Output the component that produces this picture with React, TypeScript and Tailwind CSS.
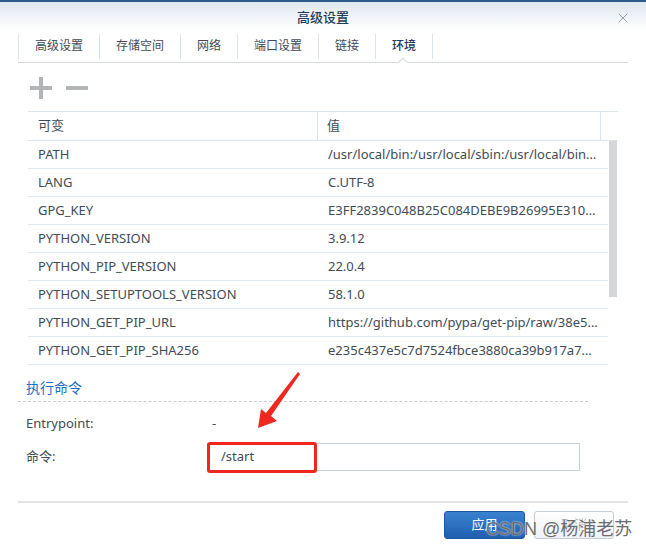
import { X } from 'lucide-react'

const tabs = ['高级设置', '存储空间', '网络', '端口设置', '链接', '环境']

const envVars: [string, string][] = [
  ['PATH', '/usr/local/bin:/usr/local/sbin:/usr/local/bin:/usr/sbin:/usr/bin:/sbin:/bin'],
  ['LANG', 'C.UTF-8'],
  ['GPG_KEY', 'E3FF2839C048B25C084DEBE9B26995E310250568'],
  ['PYTHON_VERSION', '3.9.12'],
  ['PYTHON_PIP_VERSION', '22.0.4'],
  ['PYTHON_SETUPTOOLS_VERSION', '58.1.0'],
  ['PYTHON_GET_PIP_URL', 'https://github.com/pypa/get-pip/raw/38e54e5de07c66e875c11a1ebbdb938854625dd8/public/get-pip.py'],
  ['PYTHON_GET_PIP_SHA256', 'e235c437e5c7d7524fbce3880ca39b917a73dc565e0c813465b7a7a329bb279a'],
]

const font = { fontFamily: '"Noto Sans", "Noto Sans CJK SC", sans-serif' }

export default function App() {
  return (
    <div className="w-[646px] h-[546px] bg-white overflow-hidden relative text-[#414b55]" style={font}>
      {/* title bar */}
      <div className="border-t-2 border-[#2c5b8c] bg-gradient-to-b from-[#e1e7ef] to-white h-[30px] relative flex items-center justify-center pt-[3px]">
        <span className="text-[13px] text-[#1e3c5c] font-medium">高级设置</span>
        <X className="absolute right-[15px] top-[8px] w-[16px] h-[16px] text-[#9aa3ad]" strokeWidth={1.5} />
      </div>

      {/* tabs */}
      <div className="mx-[18px] border-b border-[#d5d9de] relative">
        <div className="flex h-[32px] items-center">
          {tabs.map((t, i) => (
            <div
              key={t}
              className={
                'h-[25px] flex items-center px-[16px] text-[12px] border-l border-[#dde3ea] ' +
                (i === tabs.length - 1 ? 'border-r text-[#1e3c5c] font-medium' : 'text-[#414b55]')
              }
            >
              {t}
            </div>
          ))}
        </div>
        <div className="absolute left-[379px] bottom-[-1px] w-[12px] h-[6px] overflow-hidden">
          <div className="w-[8px] h-[8px] bg-white border-l border-t border-[#d5d9de] rotate-45 mx-auto mt-[2px]" />
        </div>
      </div>

      {/* toolbar */}
      <div className="flex items-center gap-[14px] ml-[30px] mt-[14px] h-[22px]">
        <svg width="22" height="22" viewBox="0 0 22 22">
          <rect x="0" y="9" width="22" height="4" fill="#b3b6b9" />
          <rect x="9" y="0" width="4" height="22" fill="#b3b6b9" />
        </svg>
        <svg width="22" height="22" viewBox="0 0 22 22">
          <rect x="0" y="9" width="22" height="4" fill="#b3b6b9" />
        </svg>
      </div>

      {/* table */}
      <div className="ml-[28px] mt-[12px] w-[590px] text-[13px]">
        <div className="flex h-[30px] border-y border-[#dde4ec] items-center">
          <div className="w-[290px] pl-[10px] border-r border-[#dde4ec] h-full flex items-center">可变</div>
          <div className="w-[283px] pl-[9px] border-r border-[#dde4ec] h-full flex items-center">值</div>
          <div className="flex-1" />
        </div>
        <div className="flex">
          <div className="w-[580px]">
            {envVars.map(([k, v]) => (
              <div key={k} className="flex h-[28px] items-center border-b border-[#e3e9f0]">
                <div className="w-[290px] pl-[10px] truncate">{k}</div>
                <div className="w-[280px] pl-[10px] truncate">{v}</div>
              </div>
            ))}
          </div>
          <div className="w-[8px] h-[156px] bg-[#d4d6d8] ml-px" />
        </div>
      </div>

      {/* run command section */}
      <div className="mx-[18px] mt-[12px] w-[570px]">
        <div className="pl-[8px] text-[14px] text-[#1a6fc4] pb-[3px] border-b border-dashed border-[#c8ccd0]">执行命令</div>
        <div className="flex items-center h-[22px] mt-[11px] pl-[8px] text-[13px]">
          <span className="w-[186px]">Entrypoint:</span>
          <span>-</span>
        </div>
        <div className="flex items-center mt-[8px] pl-[8px] text-[13px]">
          <span className="w-[182px]">命令:</span>
          <div className="relative w-[372px] h-[28px] border border-[#c6d0dc] flex items-center pl-[12px] text-[13px]">
            /start
            <div className="absolute left-[-2px] top-[-2px] w-[110px] h-[31px] border-[3px] border-[#f0271e] rounded-[3px]" />
          </div>
        </div>
      </div>

      {/* red arrow annotation */}
      <svg className="absolute left-[250px] top-[372px]" width="60" height="64" viewBox="0 0 60 64">
        <path d="M50 2 L21 44 L27 49 L8 56 L11 37 L16 41 L48 0 Z" fill="#f0271e" />
      </svg>

      {/* footer */}
      <div className="mx-[18px] mt-[30px] border-t-2 border-[#e3e4e6]" />
      <div className="flex justify-end gap-[9px] mr-[32px] mt-[8px]">
        <button className="w-[81px] h-[28px] rounded-[3px] bg-gradient-to-b from-[#3a82d0] to-[#1f5fb0] border border-[#1d58a0] text-white text-[13px] flex items-center justify-center">
          应用
        </button>
        <button className="w-[80px] h-[28px] rounded-[3px] bg-gradient-to-b from-white to-[#eef2f6] border border-[#c5ccd4] text-[#414b55]/40 text-[13px] flex items-center justify-center">
          取消
        </button>
      </div>

      {/* watermark */}
      <div
        className="absolute left-[486px] top-[516px] text-[18px] text-[#6c6c6c] whitespace-nowrap [text-shadow:0_0_2px_#fff]"
        style={{ fontFamily: '"Liberation Sans", "Noto Sans CJK SC", sans-serif' }}
      >
        CSDN @杨浦老苏
      </div>
    </div>
  )
}
